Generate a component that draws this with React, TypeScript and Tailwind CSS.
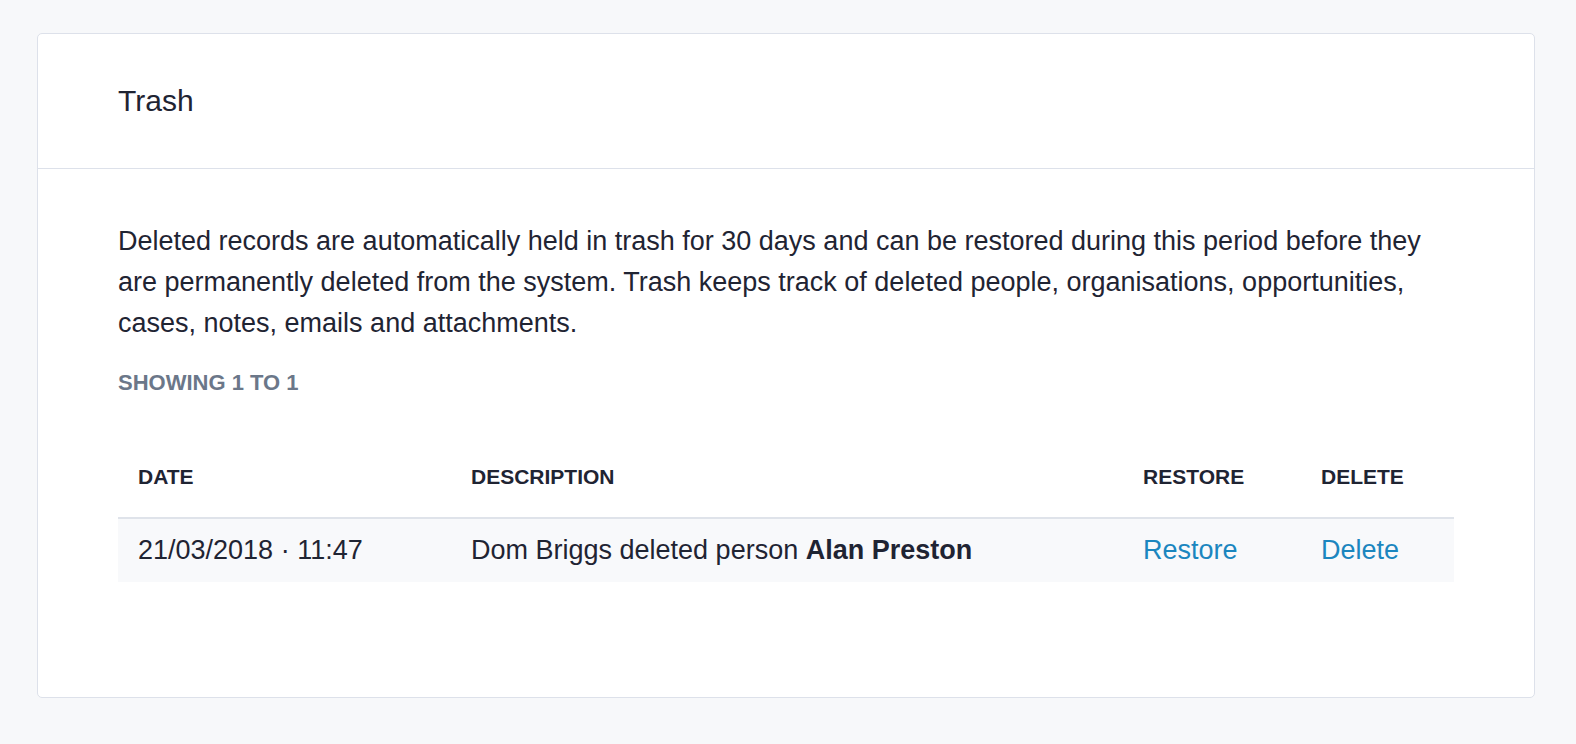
import React from "react";

export default function App() {
  return (
    <div
      className="min-h-[744px] w-full bg-[#f7f8fa] pt-[33px] pl-[37px]"
      style={{ fontFamily: '"Liberation Sans", Arial, Helvetica, sans-serif' }}
    >
      <div className="w-[1498px] rounded-[5px] border border-[#dde1ea] bg-white">
        <div className="flex h-[135px] items-center border-b border-[#dde1ea] px-[80px]">
          <h1 className="text-[30px] leading-[36px] font-normal text-[#1f2433]">Trash</h1>
        </div>
        <div className="px-[80px] pt-[52px] pb-[115px]">
          <p className="max-w-[1310px] text-[27px] leading-[41px] text-[#1f2433]">
            Deleted records are automatically held in trash for 30 days and can be restored during this period before they
            are permanently deleted from the system. Trash keeps track of deleted people, organisations, opportunities,
            cases, notes, emails and attachments.
          </p>
          <div className="mt-[26px] text-[22px] leading-[26px] font-bold text-[#6b7789]">SHOWING 1 TO 1</div>
          <table className="mt-[41px] w-[1336px] table-fixed border-collapse">
            <colgroup>
              <col className="w-[333px]" />
              <col className="w-[672px]" />
              <col className="w-[178px]" />
              <col className="w-[153px]" />
            </colgroup>
            <thead>
              <tr className="border-b-2 border-[#dfe3ea]">
                {["DATE", "DESCRIPTION", "RESTORE", "DELETE"].map((h) => (
                  <th
                    key={h}
                    className="px-[20px] pt-[28px] pb-[28px] text-left text-[21px] leading-[24px] font-bold text-[#1f2433]"
                  >
                    {h}
                  </th>
                ))}
              </tr>
            </thead>
            <tbody>
              <tr className="h-[64px] bg-[#f8f9fb] text-[27px] leading-[41px] text-[#1f2433]">
                <td className="px-[20px] align-middle whitespace-nowrap">21/03/2018 · 11:47</td>
                <td className="px-[20px] align-middle whitespace-nowrap">
                  Dom Briggs deleted person <span className="font-bold">Alan Preston</span>
                </td>
                <td className="px-[20px] align-middle">
                  <a className="text-[#1b86bf]" href="#">Restore</a>
                </td>
                <td className="px-[20px] align-middle">
                  <a className="text-[#1b86bf]" href="#">Delete</a>
                </td>
              </tr>
            </tbody>
          </table>
        </div>
      </div>
    </div>
  );
}
